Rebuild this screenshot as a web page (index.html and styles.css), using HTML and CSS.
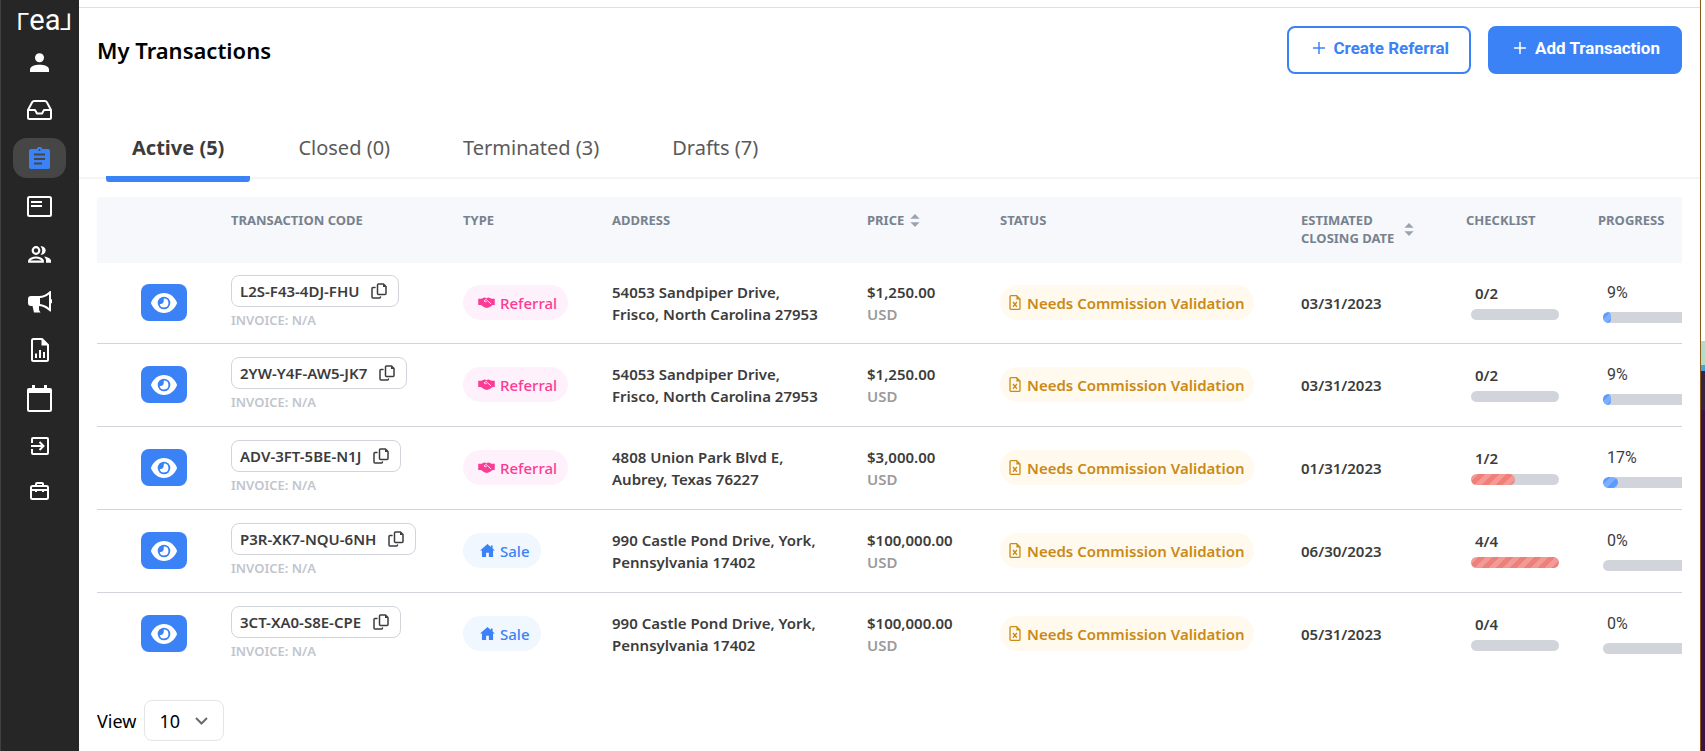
FILE: index.html
```
<!DOCTYPE html>
<html lang="en">
<head>
    <meta charset="UTF-8">
    <meta name="viewport" content="width=device-width, initial-scale=1.0">
    <title>My Transactions</title>
    <link rel="stylesheet" href="styles.css">
</head>
<body>
    <!-- Shared icons -->
    <svg class="sprite" aria-hidden="true">
        <symbol id="icon-eye" viewBox="0 0 26 20">
            <path fill="currentColor" d="M13 0C7 0 2.600 4 .3 8.900a2.500 2.500 0 0 0 0 2.200C2.600 16 7 20 13 20s10.400-4 12.700-8.900a2.500 2.500 0 0 0 0-2.200C23.400 4 19 0 13 0z"/>
            <circle cx="13" cy="10" r="6.300" fill="#3b82f6"/>
            <path fill="currentColor" d="M13 5.600a4.400 4.400 0 1 1-4.300 5.300c2.600.7 4.600-1.600 4-4.100z"/>
        </symbol>
        <symbol id="icon-copy" viewBox="0 0 16 16">
            <g fill="none" stroke="currentColor" stroke-width="1.500" stroke-linejoin="round" stroke-linecap="round">
                <path d="M7.500 1h5L15 3.500v7a1 1 0 0 1-1 1H7.500a1 1 0 0 1-1-1V2a1 1 0 0 1 1-1z"/>
                <path d="M4 4.500H2a1 1 0 0 0-1 1V14a1 1 0 0 0 1 1h6.500a1 1 0 0 0 1-1"/>
            </g>
            <path fill="currentColor" d="M12 1l3 3h-3z"/>
        </symbol>
        <symbol id="icon-handshake" viewBox="0 0 18 12">
            <path fill="currentColor" d="M0 2h3.500L6.500.6 9 1.200l2.500-.6 3 1.400H18v6.600h-2.200L12.500 11l-3 1-3-.7L3 8.600H0z"/>
            <path fill="none" stroke="#fff1fb" stroke-width="1" d="M9.500 2 6.300 4.300c.6 1.200 1.800 1.100 2.700.3l1-.6 4 3.600"/>
        </symbol>
        <symbol id="icon-home" viewBox="0 0 16 14">
            <path fill="currentColor" d="M8 0 0 7h2v7h4.500V9.500h3V14H14V7h2l-2.500-2.200V1.500h-2v1.600z"/>
        </symbol>
        <symbol id="icon-file" viewBox="0 0 12 16">
            <path fill="none" stroke="currentColor" stroke-width="1.400" d="M1.700.7h6l3.600 3.600v10a1 1 0 0 1-1 1H1.700a1 1 0 0 1-1-1V1.700a1 1 0 0 1 1-1z"/>
            <path fill="currentColor" d="M7.500.7v4h4z"/>
            <path fill="none" stroke="currentColor" stroke-width="1.400" d="m3.800 7.500 4.200 5m0-5-4.200 5"/>
        </symbol>
        <symbol id="icon-sort" viewBox="0 0 10 14">
            <path fill="currentColor" d="M5 0l5 5H0zM5 14l5-5H0z"/>
        </symbol>
    </svg>

    <div class="app">
        <!-- Side navigation -->
        <nav class="sidebar" aria-label="Main">
            <a href="#" class="logo" aria-label="real">Γ<span class="logo-mid">ea</span>⅃</a>
            <a href="#" class="nav-link" aria-label="Profile">
                <svg width="19" height="19" viewBox="0 0 19 19" fill="currentColor"><circle cx="9.500" cy="4.700" r="4.500"/><path d="M0 19v-2.500C0 13 5.500 11.700 9.500 11.700S19 13 19 16.500V19z"/></svg>
            </a>
            <a href="#" class="nav-link" aria-label="Inbox">
                <svg width="25" height="20" viewBox="0 0 25 20" fill="none" stroke="currentColor" stroke-width="2" stroke-linejoin="round"><path d="M1 10 5 2.500A2.500 2.500 0 0 1 7 1h11a2.500 2.500 0 0 1 2 1.500l4 7.500v7.500a1.500 1.500 0 0 1-1.500 1.500h-20A1.500 1.500 0 0 1 1 17.500zM1 10h7l2 3.500h5l2-3.500h7"/></svg>
            </a>
            <a href="#" class="nav-link active" aria-label="Transactions">
                <svg width="21" height="22" viewBox="0 0 21 22"><path fill="currentColor" d="M2 2h5.500a3.200 3.200 0 0 1 6 0H19a2 2 0 0 1 2 2v16a2 2 0 0 1-2 2H2a2 2 0 0 1-2-2V4a2 2 0 0 1 2-2z"/><circle cx="10.500" cy="3" r="1" fill="#464646"/><path stroke="#464646" stroke-width="2" d="M5 7.500h11M5 12h11M5 16.500h8"/></svg>
            </a>
            <a href="#" class="nav-link" aria-label="Listings">
                <svg width="25" height="21" viewBox="0 0 25 21" fill="none" stroke="currentColor" stroke-width="2"><rect x="1" y="1" width="23" height="19" rx="1.500"/><path d="M4 6h11M4 10h11"/></svg>
            </a>
            <a href="#" class="nav-link" aria-label="Network">
                <svg width="23" height="17" viewBox="0 0 23 17"><g fill="none" stroke="currentColor" stroke-width="2.200"><circle cx="8" cy="4.500" r="3.300"/><path d="M1.200 15.700v-1c0-1.700 4-3.200 6.800-3.200s6.800 1.500 6.800 3.200v1z"/></g><path fill="currentColor" d="M12.500.3a4.300 4.300 0 1 1 0 8.400 6 6 0 0 0 0-8.400zM16 10.500c3.500.5 7 1.900 7 4.300v2h-5v-2c0-1.800-.7-3.200-2-4.300z"/></svg>
            </a>
            <a href="#" class="nav-link" aria-label="Announcements">
                <svg width="24" height="22" viewBox="0 0 24 22"><path fill="currentColor" fill-rule="evenodd" d="M3 5h8c4 0 8-2 11-5h1v8a2.500 2.500 0 0 1 0 4.500v8h-1c-3-3-7-5.500-11-5.500v4l1.500 2.500H6L4.500 15H3a3 3 0 0 1-3-3V8a3 3 0 0 1 3-3zm9 2v6c3 .3 6 1.500 9 4V3.500c-3 2.300-6 3.300-9 3.500z"/></svg>
            </a>
            <a href="#" class="nav-link" aria-label="Reports">
                <svg width="18" height="24" viewBox="0 0 18 24"><path fill="none" stroke="currentColor" stroke-width="2" stroke-linejoin="round" d="M2.500 1H11l6 6v14.500a1.500 1.500 0 0 1-1.500 1.500h-13A1.500 1.500 0 0 1 1 21.500v-19A1.500 1.500 0 0 1 2.500 1z"/><path fill="currentColor" d="M10.500 1v6.500H17z"/><path stroke="currentColor" stroke-width="2" d="M5 20v-4.500M9 20v-8M13 20v-6"/></svg>
            </a>
            <a href="#" class="nav-link" aria-label="Calendar">
                <svg width="25" height="27" viewBox="0 0 25 27"><path fill="none" stroke="currentColor" stroke-width="2" d="M1 6h23v18.500a1.500 1.500 0 0 1-1.500 1.500h-20A1.500 1.500 0 0 1 1 24.500z"/><path fill="currentColor" d="M5 0h3v3h9V0h3v3h3a2 2 0 0 1 2 2v3H0V5a2 2 0 0 1 2-2h3z"/></svg>
            </a>
            <a href="#" class="nav-link" aria-label="Sign in">
                <svg width="18" height="18" viewBox="0 0 18 18" fill="none" stroke="currentColor" stroke-width="2"><path d="M1 6V2a1 1 0 0 1 1-1h14a1 1 0 0 1 1 1v14a1 1 0 0 1-1 1H2a1 1 0 0 1-1-1v-4M0 9h12M8.500 5l4 4-4 4"/></svg>
            </a>
            <a href="#" class="nav-link small" aria-label="Briefcase">
                <svg width="19" height="18" viewBox="0 0 19 18" fill="none" stroke="currentColor" stroke-width="2"><rect x="1" y="4" width="17" height="13" rx="1.500"/><path d="M6 4V2a1 1 0 0 1 1-1h5a1 1 0 0 1 1 1v2M1 8h17M6 7v3M13 7v3"/></svg>
            </a>
        </nav>

        <main class="main">
            <header class="page-header">
                <h1>My Transactions</h1>
                <div class="actions">
                    <button type="button" class="btn btn-outline"><svg width="12" height="12" viewBox="0 0 12 12"><path stroke="currentColor" stroke-width="1.500" d="M6 0v12M0 6h12"/></svg>Create Referral</button>
                    <button type="button" class="btn btn-primary"><svg width="12" height="12" viewBox="0 0 12 12"><path stroke="currentColor" stroke-width="1.500" d="M6 0v12M0 6h12"/></svg>Add Transaction</button>
                </div>
            </header>

            <nav class="tabs" aria-label="Transaction status">
                <a href="#" class="tab selected">Active (5)</a>
                <a href="#" class="tab">Closed (0)</a>
                <a href="#" class="tab">Terminated (3)</a>
                <a href="#" class="tab">Drafts (7)</a>
            </nav>

            <div class="table-wrap">
                <table class="transactions">
                    <colgroup>
                        <col class="col-view">
                        <col class="col-code">
                        <col class="col-type">
                        <col class="col-address">
                        <col class="col-price">
                        <col class="col-status">
                        <col class="col-date">
                        <col class="col-bar">
                        <col class="col-bar">
                    </colgroup>
                    <thead>
                        <tr>
                            <th></th>
                            <th>Transaction Code</th>
                            <th>Type</th>
                            <th>Address</th>
                            <th><span class="sortable">Price <svg class="sort"><use href="#icon-sort"/></svg></span></th>
                            <th>Status</th>
                            <th><span class="sortable wide">Estimated<br>Closing Date <svg class="sort"><use href="#icon-sort"/></svg></span></th>
                            <th>Checklist</th>
                            <th>Progress</th>
                        </tr>
                    </thead>
                    <tbody>
                        <tr>
                            <td><button type="button" class="view-btn" aria-label="View"><svg><use href="#icon-eye"/></svg></button></td>
                            <td><button type="button" class="code">L2S-F43-4DJ-FHU <svg><use href="#icon-copy"/></svg></button><p class="invoice">INVOICE: N/A</p></td>
                            <td><span class="pill referral"><svg><use href="#icon-handshake"/></svg>Referral</span></td>
                            <td>54053 Sandpiper Drive,<br>Frisco, North Carolina 27953</td>
                            <td>$1,250.00<br><span class="currency">USD</span></td>
                            <td><span class="pill status"><svg><use href="#icon-file"/></svg>Needs Commission Validation</span></td>
                            <td>03/31/2023</td>
                            <td><div class="meter checklist"><span>0/2</span><div class="bar"></div></div></td>
                            <td><div class="meter progress"><span>9%</span><div class="bar"><div class="fill" style="width: 9%"></div></div></div></td>
                        </tr>
                        <tr>
                            <td><button type="button" class="view-btn" aria-label="View"><svg><use href="#icon-eye"/></svg></button></td>
                            <td><button type="button" class="code">2YW-Y4F-AW5-JK7 <svg><use href="#icon-copy"/></svg></button><p class="invoice">INVOICE: N/A</p></td>
                            <td><span class="pill referral"><svg><use href="#icon-handshake"/></svg>Referral</span></td>
                            <td>54053 Sandpiper Drive,<br>Frisco, North Carolina 27953</td>
                            <td>$1,250.00<br><span class="currency">USD</span></td>
                            <td><span class="pill status"><svg><use href="#icon-file"/></svg>Needs Commission Validation</span></td>
                            <td>03/31/2023</td>
                            <td><div class="meter checklist"><span>0/2</span><div class="bar"></div></div></td>
                            <td><div class="meter progress"><span>9%</span><div class="bar"><div class="fill" style="width: 9%"></div></div></div></td>
                        </tr>
                        <tr>
                            <td><button type="button" class="view-btn" aria-label="View"><svg><use href="#icon-eye"/></svg></button></td>
                            <td><button type="button" class="code">ADV-3FT-5BE-N1J <svg><use href="#icon-copy"/></svg></button><p class="invoice">INVOICE: N/A</p></td>
                            <td><span class="pill referral"><svg><use href="#icon-handshake"/></svg>Referral</span></td>
                            <td>4808 Union Park Blvd E,<br>Aubrey, Texas 76227</td>
                            <td>$3,000.00<br><span class="currency">USD</span></td>
                            <td><span class="pill status"><svg><use href="#icon-file"/></svg>Needs Commission Validation</span></td>
                            <td>01/31/2023</td>
                            <td><div class="meter checklist"><span>1/2</span><div class="bar"><div class="fill" style="width: 50%"></div></div></div></td>
                            <td><div class="meter progress"><span>17%</span><div class="bar"><div class="fill" style="width: 17%"></div></div></div></td>
                        </tr>
                        <tr>
                            <td><button type="button" class="view-btn" aria-label="View"><svg><use href="#icon-eye"/></svg></button></td>
                            <td><button type="button" class="code">P3R-XK7-NQU-6NH <svg><use href="#icon-copy"/></svg></button><p class="invoice">INVOICE: N/A</p></td>
                            <td><span class="pill sale"><svg><use href="#icon-home"/></svg>Sale</span></td>
                            <td>990 Castle Pond Drive, York,<br>Pennsylvania 17402</td>
                            <td>$100,000.00<br><span class="currency">USD</span></td>
                            <td><span class="pill status"><svg><use href="#icon-file"/></svg>Needs Commission Validation</span></td>
                            <td>06/30/2023</td>
                            <td><div class="meter checklist"><span>4/4</span><div class="bar"><div class="fill" style="width: 100%"></div></div></div></td>
                            <td><div class="meter progress"><span>0%</span><div class="bar"></div></div></td>
                        </tr>
                        <tr>
                            <td><button type="button" class="view-btn" aria-label="View"><svg><use href="#icon-eye"/></svg></button></td>
                            <td><button type="button" class="code">3CT-XA0-S8E-CPE <svg><use href="#icon-copy"/></svg></button><p class="invoice">INVOICE: N/A</p></td>
                            <td><span class="pill sale"><svg><use href="#icon-home"/></svg>Sale</span></td>
                            <td>990 Castle Pond Drive, York,<br>Pennsylvania 17402</td>
                            <td>$100,000.00<br><span class="currency">USD</span></td>
                            <td><span class="pill status"><svg><use href="#icon-file"/></svg>Needs Commission Validation</span></td>
                            <td>05/31/2023</td>
                            <td><div class="meter checklist"><span>0/4</span><div class="bar"></div></div></td>
                            <td><div class="meter progress"><span>0%</span><div class="bar"></div></div></td>
                        </tr>
                    </tbody>
                </table>
            </div>

            <!-- Page size -->
            <div class="pager">
                <label for="pageSize">View</label>
                <div class="select-box">
                    <select id="pageSize">
                        <option selected>10</option>
                        <option>20</option>
                        <option>50</option>
                    </select>
                    <svg class="chevron" width="13" height="8" viewBox="0 0 13 8"><path fill="none" stroke="currentColor" stroke-width="2" d="m1 1 5.500 5.500L12 1"/></svg>
                </div>
            </div>
        </main>
        <div class="edge"></div>
    </div>
</body>
</html>
```
FILE: styles.css
```
* {
    box-sizing: border-box;
}

body {
    margin: 0;
    background: #fff;
    color: #3c3c3c;
    font-family: "Noto Sans", "Open Sans", sans-serif;
    font-size: 15px;
    font-weight: 600;
    line-height: 22px;
}

button {
    font: inherit;
    cursor: pointer;
}

a {
    color: inherit;
    text-decoration: none;
}

.sprite {
    display: none;
}

.app {
    display: flex;
    min-height: 100vh;
}

/* Side navigation */
.sidebar {
    display: flex;
    flex-direction: column;
    align-items: center;
    flex: none;
    width: 79px;
    padding-top: 7px;
    background: #262626;
    box-shadow: inset 1px 0 #404040;
    color: #fff;
}

.logo {
    height: 31px;
    padding-left: 10px;
    font-family: Roboto, sans-serif;
    font-size: 23px;
    font-weight: 400;
    line-height: 26px;
}

.logo-mid {
    font-size: 29px;
}

.nav-link {
    display: flex;
    align-items: center;
    justify-content: center;
    width: 53px;
    height: 40px;
    margin: 4px 0;
    border-radius: 14px;
}

.nav-link.active {
    background: #464646;
    color: #3b82f6;
}

.nav-link.small {
    height: 34px;
}

/* Page content */
.main {
    flex: 1;
    min-width: 0;
    margin-top: 7px;
    border-top: 1px solid #e0e0e0;
}

.page-header {
    display: flex;
    justify-content: space-between;
    padding: 18px 18px 0;
    height: 120px;
}

.page-header h1 {
    margin: 0;
    color: #000;
    font-size: 22px;
    font-weight: 600;
    line-height: 48px;
}

.actions {
    display: flex;
    align-items: flex-start;
    gap: 17px;
}

.btn {
    display: flex;
    align-items: center;
    gap: 9px;
    height: 48px;
    padding: 0 20px 4px 24px;
    border: 2px solid #3b82f6;
    border-radius: 8px;
    font-family: Roboto, sans-serif;
    font-size: 17px;
    font-weight: 700;
}

.btn-outline {
    background: #fff;
    color: #3b82f6;
}

.btn-primary {
    background: #3b82f6;
    color: #fff;
}

/* Tabs */
.tabs {
    display: flex;
    gap: 23px;
    padding-left: 27px;
    border-bottom: 2px solid #f3f4f6;
    color: #5a5a5a;
    font-size: 20px;
    font-weight: 400;
}

.tab {
    height: 49px;
    padding: 0 25px;
    line-height: 40px;
}

.tab.selected {
    margin-bottom: -5px;
    padding: 0 26px;
    height: 54px;
    border-bottom: 6px solid #3b82f6;
    border-radius: 3px;
    color: #3c3c3c;
    font-weight: 700;
}

/* Transactions table */
.table-wrap {
    margin: 18px 18px 0;
    overflow: hidden;
    border-radius: 4px 0 0 0;
}

.transactions {
    width: 100%;
    min-width: 1609px;
    table-layout: fixed;
    border-collapse: collapse;
}

.col-view { width: 110px; }
.col-code { width: 232px; }
.col-type { width: 149px; }
.col-address { width: 255px; }
.col-price { width: 133px; }
.col-status { width: 301px; }
.col-date { width: 165px; }
.col-bar { width: 132px; }

.transactions th {
    height: 66px;
    padding: 14px 0 0 24px;
    background: #f6f8fc;
    color: #78828f;
    font-size: 13px;
    font-weight: 700;
    line-height: 18px;
    text-align: left;
    text-transform: uppercase;
    vertical-align: top;
}

.transactions td {
    height: 83px;
    padding: 0 0 0 24px;
    white-space: nowrap;
}

.transactions tbody tr:first-child td {
    height: 80px;
}

.transactions td:first-child {
    padding-left: 44px;
}

.transactions tbody tr + tr {
    border-top: 1px solid #d1d5db;
}

.sortable {
    display: inline-flex;
    align-items: center;
    gap: 6px;
}

.sortable.wide {
    gap: 10px;
}

.sort {
    width: 10px;
    height: 13px;
    color: #9ca3af;
}

.view-btn {
    display: flex;
    align-items: center;
    justify-content: center;
    width: 46px;
    height: 37px;
    padding: 0;
    background: #3b82f6;
    border: 0;
    border-radius: 8px;
    color: #fff;
}

.view-btn svg {
    width: 26px;
    height: 20px;
}

.code {
    display: flex;
    align-items: center;
    gap: 12px;
    height: 32px;
    padding: 0 11px 0 8px;
    background: #fff;
    border: 1px solid #d1d5db;
    border-radius: 8px;
    color: #3c3c3c;
}

.code svg {
    width: 16px;
    height: 16px;
}

.invoice {
    margin: 3px 0 0;
    color: #c1c5cd;
    font-size: 13px;
    font-weight: 600;
    line-height: 20px;
}

.pill {
    display: inline-flex;
    align-items: center;
    gap: 5px;
    height: 35px;
    padding: 0 11px 0 15px;
    border-radius: 18px;
    font-weight: 500;
}

.referral {
    background: #fff1fb;
    color: #fb3b94;
}

.referral svg {
    width: 17px;
    height: 11px;
}

.sale {
    padding-left: 17px;
    background: #f1f7ff;
    color: #3b82f6;
}

.sale svg {
    width: 15px;
    height: 13px;
}

.status {
    gap: 6px;
    padding: 0 9px;
    background: #fff9ee;
    color: #ca8a15;
    font-weight: 600;
}

.status svg {
    width: 12px;
    height: 15px;
}

.currency {
    color: #9b9b9b;
}

/* Checklist and progress bars */
.meter {
    display: flex;
    flex-direction: column;
    gap: 5px;
    width: 88px;
    margin-left: 5px;
    padding-bottom: 4px;
}

.meter span {
    padding-left: 4px;
}

.bar {
    height: 11px;
    overflow: hidden;
    background: #d1d5db;
    border-radius: 6px;
}

.fill {
    height: 11px;
    border-radius: 6px;
    background: repeating-linear-gradient(135deg, #f29b96 0 5px, #f07f79 5px 10px);
}

.progress {
    gap: 8px;
    padding-bottom: 0;
}

.progress span {
    font-family: Roboto, sans-serif;
    font-size: 16px;
    font-weight: 400;
}

.progress .fill {
    background: repeating-linear-gradient(135deg, #5b9bff 0 5px, #7cafff 5px 10px);
}

/* Page size */
.pager {
    display: flex;
    align-items: center;
    gap: 8px;
    padding: 25px 18px 10px;
    color: #000;
    font-size: 18px;
    font-weight: 400;
}

.select-box {
    display: grid;
    align-items: center;
}

.select-box select {
    grid-area: 1 / 1;
    width: 80px;
    height: 41px;
    padding: 0 14px;
    appearance: none;
    background: #fff;
    border: 1px solid #e5e5e5;
    border-radius: 8px;
    color: #000;
    font: inherit;
}

.chevron {
    grid-area: 1 / 1;
    justify-self: end;
    margin-right: 16px;
    color: #6b6b76;
    pointer-events: none;
}

/* Desktop strip beside the window */
.edge {
    flex: none;
    width: 5px;
    border-left: 1px solid #8a5a14;
    background: linear-gradient(#fff 0 341px, #b5dccb 341px 365px, #4aa3d8 365px 371px, #3a2140 371px 410px, #3d1040 410px);
}
```
